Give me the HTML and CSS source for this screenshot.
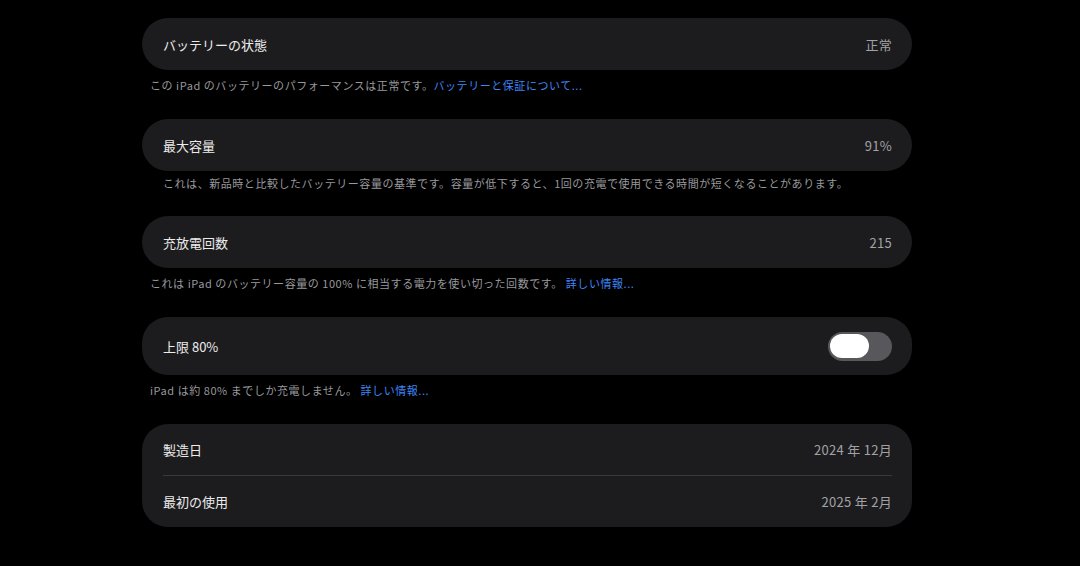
FILE: index.html
```html
<!DOCTYPE html>
<html lang="ja">

<head>
    <meta name="viewport" content="width=device-width, initial-scale=1">
    <title>
        バッテリーの状態と充電
    </title>
    <link rel="stylesheet" href="styles.css">
</head>

<body>
    <div class="page">

        <div class="section">
            <div class="card">
                <div class="row">
                    <span class="label">バッテリーの状態</span>
                    <span class="value">正常</span>
                </div>
            </div>
            <p class="note">この iPad のバッテリーのパフォーマンスは正常です。<a class="link">バッテリーと保証について...</a></p>
        </div>

        <div class="section">
            <div class="card">
                <div class="row">
                    <span class="label">最大容量</span>
                    <span class="value">91%</span>
                </div>
            </div>
            <p class="note note-indent">これは、新品時と比較したバッテリー容量の基準です。容量が低下すると、1回の充電で使用できる時間が短くなることがあります。</p>
        </div>

        <div class="section">
            <div class="card">
                <div class="row">
                    <span class="label">充放電回数</span>
                    <span class="value">215</span>
                </div>
            </div>
            <p class="note">これは iPad のバッテリー容量の 100% に相当する電力を使い切った回数です。 <a class="link">詳しい情報...</a></p>
        </div>

        <div class="section">
            <div class="card">
                <div class="row row-tall">
                    <span class="label">上限 80%</span>
                    <label class="switch">
                        <input type="checkbox" id="limit">
                        <span class="slider"></span>
                    </label>
                </div>
            </div>
            <p class="note">iPad は約 80% までしか充電しません。 <a class="link">詳しい情報...</a></p>
        </div>

        <div class="section">
            <div class="card">
                <div class="row row-list">
                    <span class="label">製造日</span>
                    <span class="value">2024 年 12月</span>
                </div>
                <div class="divider"></div>
                <div class="row row-list">
                    <span class="label">最初の使用</span>
                    <span class="value">2025 年 2月</span>
                </div>
            </div>
        </div>

    </div>
</body>

</html>
```

FILE: styles.css
```css
body {
    margin: 0;
    background-color: #000;
    font-family: "Noto Sans CJK JP", "Noto Sans", sans-serif;
    color: #ececec;
}

.page {
    width: 770px;
    padding: 18px 0 0 142px;
}

.section {
    margin-bottom: 26px;
}

.card {
    background-color: #1c1c1e;
    border-radius: 26px;
    overflow: hidden;
}

.row {
    display: flex;
    justify-content: space-between;
    align-items: center;
    height: 52px;
    padding: 0 20px 0 21px;
}

.row-tall {
    height: 58px;
}

.row-list {
    height: 51px;
}

.label {
    font-size: 13px;
    color: #ececec;
}

.value {
    font-size: 13px;
    letter-spacing: 0.3px;
    color: #a2a2a6;
}

.divider {
    height: 1px;
    margin: 0 20px 0 21px;
    background-color: #38383a;
}

.note {
    margin: 8px 0 0 8px;
    font-size: 11px;
    line-height: 15px;
    color: #98989d;
    letter-spacing: 0.55px;
}

.note-indent {
    margin: 5px 0 0 21px;
    line-height: 14px;
}

.link {
    color: #3d86f5;
}

.switch {
    position: relative;
    display: inline-block;
    width: 64px;
    height: 29px;
}

.switch input {
    opacity: 0;
    width: 0;
    height: 0;
}

.slider {
    position: absolute;
    top: 0;
    left: 0;
    right: 0;
    bottom: 0;
    border-radius: 15px;
    background-color: #58585c;
}

.slider:before {
    position: absolute;
    content: "";
    width: 39px;
    height: 24px;
    left: 2px;
    top: 2px;
    border-radius: 12px;
    background-color: #fff;
}

input:checked+.slider {
    background-color: #30d158;
}

input:checked+.slider:before {
    transform: translateX(21px);
}
```
